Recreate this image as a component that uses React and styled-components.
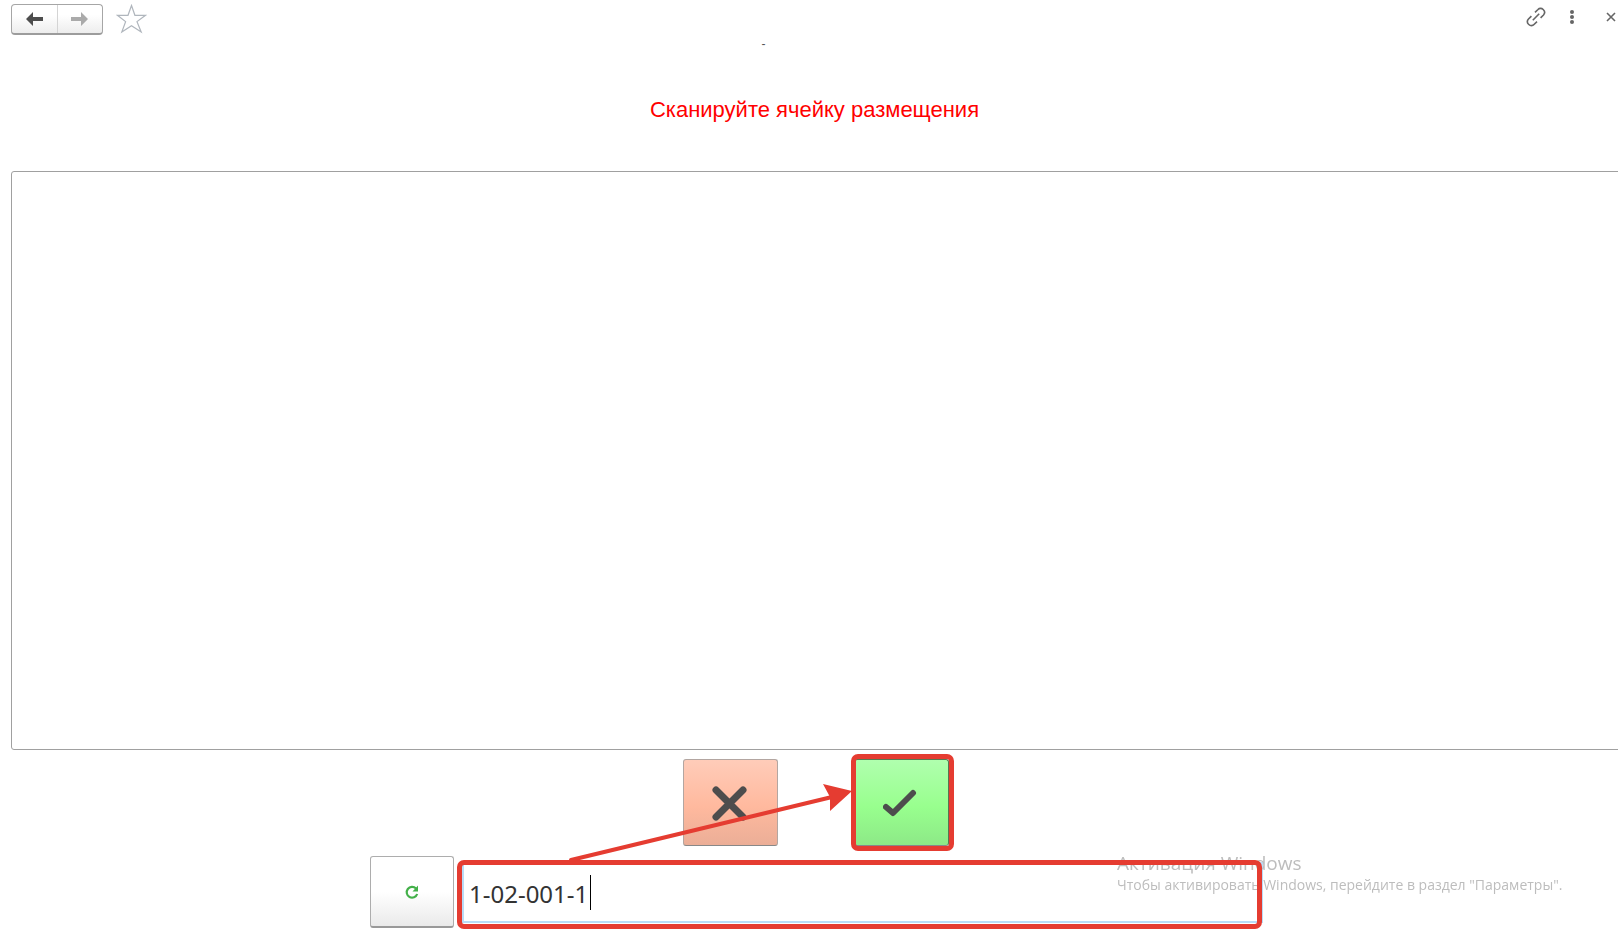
import React from "react";
import styled, { createGlobalStyle } from "styled-components";

const GlobalStyle = createGlobalStyle`
  *, *::before, *::after { box-sizing: border-box; }
  body {
    margin: 0;
    overflow: hidden;
    background: #fff;
    color: #333;
    font-family: "Liberation Sans", Arial, sans-serif;
  }
`;

const Page = styled.div`
  display: flex;
  flex-direction: column;
  min-height: 100vh;
`;

const Toolbar = styled.header`
  display: flex;
  align-items: flex-start;
  justify-content: space-between;
  height: 37px;
  margin-right: -4px;
  padding-left: 11px;
`;

const ToolGroup = styled.div`
  display: flex;
  align-items: center;
  gap: ${(p) => p.$gap}px;
  padding-top: ${(p) => p.$top}px;
`;

const History = styled.nav`
  display: flex;
  width: 92px;
  height: 31px;
  border: 1px solid #a6a6a6;
  border-bottom: 2px solid #9c9c9c;
  border-radius: 4px;
  background: linear-gradient(#fff 35%, #ededed);
`;

const HistoryButton = styled.button`
  display: grid;
  place-items: center;
  flex: 1;
  padding: 0;
  border: 0;
  background: none;
  color: ${(p) => (p.disabled ? "#aaa" : "#4d4d4d")};

  & + & {
    border-left: 1px solid #d4d4d4;
  }
`;

const IconButton = styled.button`
  display: grid;
  place-items: center;
  width: ${(p) => p.$width}px;
  height: 32px;
  padding: 0;
  border: 0;
  background: none;
  color: #666;
`;

const Form = styled.main`
  display: flex;
  flex: 1;
  flex-direction: column;
  align-items: center;
  margin-right: -4px;
  padding: 0 0 8px 11px;
`;

const Status = styled.p`
  margin: 0 106px 0 0;
  color: #555;
  font-size: 12px;
  line-height: 14px;
`;

const Title = styled.h1`
  margin: 45px 4px 47px 0;
  color: #f00;
  font-size: 22px;
  font-weight: 400;
  line-height: 28px;
`;

const Board = styled.section`
  flex: 1;
  align-self: stretch;
  border: 1px solid #a0a0a0;
  border-radius: 3px;
`;

const Actions = styled.div`
  display: flex;
  gap: 76px;
  margin: 9px 2px 10px 0;
`;

const Marked = styled.div`
  position: relative;
`;

const tones = {
  danger: "linear-gradient(#ffccb9, #ffb99e 55%, #ebae97)",
  success: "linear-gradient(#b0ffae, #98ff8e 55%, #8de987)",
};

const ActionButton = styled.button`
  display: grid;
  place-items: center;
  width: 95px;
  height: 87px;
  padding: 0;
  border: 1px solid ${(p) => (p.$tone === "danger" ? "#b3a6a1" : "#557a52")};
  border-bottom-color: #888;
  border-radius: 3px;
  background: ${(p) => tones[p.$tone]};
`;

const Highlight = styled.span`
  position: absolute;
  z-index: 2;
  inset: ${(p) => p.$inset};
  border: 5px solid #e53c31;
  border-radius: 7px;
  pointer-events: none;
`;

const Arrow = styled.svg`
  position: absolute;
  z-index: 3;
  top: 20px;
  right: 97px;
  pointer-events: none;
`;

const ScanRow = styled.div`
  display: flex;
  gap: 8px;
  width: 893px;
  max-width: 100%;
  height: 72px;
`;

const RefreshButton = styled.button`
  display: grid;
  place-items: center;
  width: 84px;
  padding: 0;
  border: 1px solid #adadad;
  border-bottom: 2px solid #999;
  border-radius: 3px;
  background: linear-gradient(#fff 50%, #eaeaea);
`;

const ScanField = styled.label`
  position: relative;
  display: flex;
  flex: 1;
  padding: 6px 0 5px;
`;

const ScanInput = styled.input`
  width: 100%;
  min-width: 0;
  padding: 2px 5px 0;
  border: 2px solid #b9dcf7;
  outline: 0;
  background: #fff;
  color: #333;
  font-family: "Noto Sans", sans-serif;
  font-size: 24px;
`;

const Caret = styled.span`
  position: absolute;
  top: 19px;
  left: 128px;
  width: 1px;
  height: 35px;
  background: #000;
`;

const Watermark = styled.aside`
  position: fixed;
  z-index: 1;
  right: 47px;
  bottom: 41px;
  width: 454px;
  color: #bdbdbd;
  font-family: "Open Sans", sans-serif;
  white-space: nowrap;
  pointer-events: none;
`;

const WatermarkTitle = styled.p`
  margin: 0;
  font-size: 19px;
  line-height: 24px;
`;

const WatermarkText = styled.p`
  margin: 0;
  font-size: 14px;
  line-height: 20px;
`;

const BackArrow = ({ flip }) => (
  <svg width="18" height="14" viewBox="0 0 18 14" aria-hidden="true">
    <path
      d="M1 7 8 0V5H18V9H8V14Z"
      fill="currentColor"
      transform={flip ? "matrix(-1 0 0 1 18 0)" : undefined}
    />
  </svg>
);

export default function App() {
  return (
    <Page>
      <GlobalStyle />
      <Toolbar>
        <ToolGroup $gap={13} $top={3}>
          <History>
            <HistoryButton aria-label="Назад"><BackArrow /></HistoryButton>
            <HistoryButton aria-label="Вперёд" disabled><BackArrow flip /></HistoryButton>
          </History>
          <IconButton $width={31} aria-label="В избранное">
            <svg width="31" height="30" viewBox="0 0 31 30" fill="none" stroke="#b0b6bd" strokeWidth="1.2">
              <path d="M15.5 1.5 18.9 11.3H29.5L21 17.6 25.2 28 15.5 21.7 5.8 28 9.6 17.6 1.5 11.3H12Z" />
            </svg>
          </IconButton>
        </ToolGroup>
        <ToolGroup $gap={8} $top={1}>
          <IconButton $width={28} aria-label="Получить ссылку">
            <svg width="20" height="20" viewBox="0 0 20 20" fill="none" stroke="currentColor" strokeWidth="1.6">
              <path d="M6.8 13.2 13.2 6.8M9 5.3 12 2.5C13.3 1.1 15.6 1 17.2 2.5 18.8 4 18.9 6.4 17.5 8L14.6 10.9M11 14.7 8 17.5C6.7 18.9 4.4 19 2.8 17.5 1.2 16 1.1 13.6 2.5 12L5.4 9.1" />
            </svg>
          </IconButton>
          <IconButton $width={28} aria-label="Ещё">
            <svg width="6" height="16" viewBox="0 0 6 16" fill="currentColor">
              <circle cx="3" cy="3" r="2" />
              <circle cx="3" cy="8" r="2" />
              <circle cx="3" cy="13" r="2" />
            </svg>
          </IconButton>
          <IconButton $width={28} aria-label="Закрыть">
            <svg width="18" height="10" viewBox="0 0 18 10" stroke="currentColor" strokeWidth="1.6">
              <path d="M8 1 16 9M16 1 8 9" />
            </svg>
          </IconButton>
        </ToolGroup>
      </Toolbar>
      <Form>
        <Status>-</Status>
        <Title>Сканируйте ячейку размещения</Title>
        <Board />
        <Actions>
          <ActionButton $tone="danger" aria-label="Отмена">
            <svg width="36" height="36" viewBox="0 0 36 36" stroke="#4d4d4d" strokeWidth="7" strokeLinecap="round">
              <path d="M4 5 31 32M31 5 4 32" />
            </svg>
          </ActionButton>
          <Marked>
            <ActionButton $tone="success" aria-label="Подтвердить">
              <svg width="36" height="28" viewBox="0 0 36 28" fill="none" stroke="#4d4d4d" strokeWidth="6" strokeLinecap="round" strokeLinejoin="round">
                <path d="M3 18 10 24 30 4" />
              </svg>
            </ActionButton>
            <Highlight $inset="-5px -5px -5px -3px" />
            <Arrow width="290" height="90" viewBox="0 0 290 90" aria-hidden="true">
              <path d="M9 81 270 18" fill="none" stroke="#e53c31" strokeWidth="4" strokeLinecap="round" />
              <path d="M261 5 290 12 268 32 268 18Z" fill="#e53c31" />
            </Arrow>
          </Marked>
        </Actions>
        <ScanRow>
          <RefreshButton aria-label="Обновить">
            <svg width="16" height="16" viewBox="0 0 16 16" aria-hidden="true">
              <path d="M12 4.5A5.4 5.4 0 1 0 13.2 10" fill="none" stroke="#43b049" strokeWidth="2.2" />
              <path d="M14 1.500V7.500H8.500Z" fill="#43b049" />
            </svg>
          </RefreshButton>
          <ScanField>
            <ScanInput type="text" aria-label="Ячейка размещения" defaultValue="1-02-001-1" />
            <Caret />
            <Highlight $inset="4px 1px -1px -5px" />
          </ScanField>
        </ScanRow>
      </Form>
      <Watermark>
        <WatermarkTitle>Активация Windows</WatermarkTitle>
        <WatermarkText>Чтобы активировать Windows, перейдите в раздел "Параметры".</WatermarkText>
      </Watermark>
    </Page>
  );
}
